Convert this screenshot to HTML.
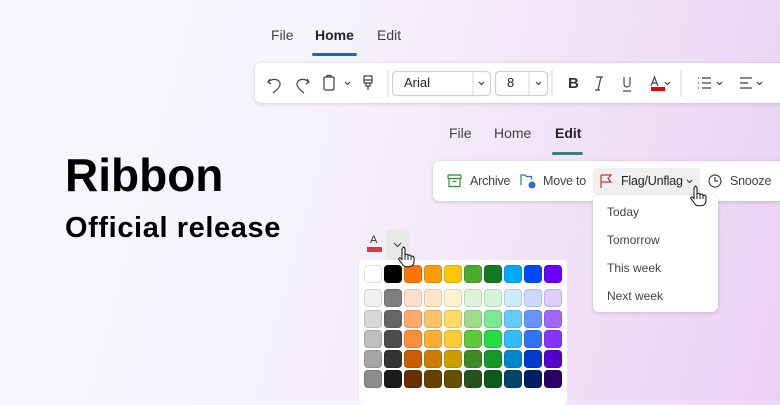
<!DOCTYPE html>
<html><head><meta charset="utf-8"><style>
*{box-sizing:border-box;margin:0;padding:0}
body{width:780px;height:400px;overflow:hidden;position:relative;font-family:"Segoe UI","Liberation Sans",sans-serif;background:linear-gradient(105deg,#f8f8fd 0%,#f6f3fc 40%,#efdcf6 80%,#ebcff3 100%);color:#242424}
.abs{position:absolute}
.t{font-size:14px;color:#424242}
.panel{background:#fff;border-radius:6px;box-shadow:0 1px 4px rgba(0,0,0,.14),0 0 1px rgba(0,0,0,.12)}
svg{position:absolute;overflow:visible}
.sw{position:absolute;width:18px;height:18px;border-radius:4px;border:1px solid rgba(0,0,0,.12)}
</style></head><body>
<div class="abs" style="left:65px;top:147px;font-size:46px;font-weight:bold;color:#000;font-family:'Liberation Sans',sans-serif;line-height:56px">Ribbon</div>
<div class="abs" style="left:65px;top:211px;font-size:29px;font-weight:bold;color:#000;font-family:'Liberation Sans',sans-serif;line-height:34px;letter-spacing:.6px">Official release</div>

<div class="abs t" style="left:271px;top:27px">File</div>
<div class="abs t" style="left:315px;top:27px;font-weight:bold;color:#242424">Home</div>
<div class="abs" style="left:312px;top:53px;width:45px;height:3px;border-radius:2px;background:#0f6cbd"></div>
<div class="abs t" style="left:377px;top:27px">Edit</div>

<div class="abs panel" style="left:255px;top:63px;width:540px;height:40px"></div>
<svg style="left:0;top:0" width="780" height="400" fill="none" stroke="#424242" stroke-width="1.2">
<path d="M270 79 l-2 3 3 2 M268 82 c6-5 13-2 12 3 c-1 4-5 6-7 8"/>
<path d="M307 79 l2 3 -3 2 M309 82 c-6-5 -13-2 -12 3 c1 4 5 6 7 8"/>
<rect x="324" y="77" width="10" height="13" rx="1.5"/><path d="M327 77 v-1.5 h4 v1.5"/>
<path d="M345 82 l2.5 2.5 2.5-2.5"/>
<path d="M364 76 h8 v7 h-8 z M364 80 h8 M366 83 v3 h4 v-3 M368 86 v4"/>
<path d="M388 70 v27" stroke="#ddd"/>
<rect x="392.5" y="71.5" width="98" height="24" rx="4" stroke="#d1d1d1"/>
<path d="M473 72 v23" stroke="#e0e0e0"/><path d="M479 82 l2.5 2.5 2.5-2.5"/>
<rect x="495.5" y="71.5" width="52" height="24" rx="4" stroke="#d1d1d1"/>
<path d="M529 72 v23" stroke="#e0e0e0"/><path d="M536 82 l2.5 2.5 2.5-2.5"/>
<path d="M552 70 v27" stroke="#ddd"/>
<path d="M598 90 l3-13 M596 77 h7 M595 90 h5"/>
<path d="M624 77 v7 a3 3 0 0 0 6 0 v-7 M623 91 h8"/>
<path d="M651 86 l3.5-9 3.5 9 M652.5 83 h5"/>
<path d="M665 82 l2.5 2.5 2.5-2.5"/>
<path d="M681 70 v27" stroke="#ddd"/>
<path d="M698 78 h1 M698 83 h1 M698 88 h1 M702 78 h9 M702 83 h9 M702 88 h9"/>
<path d="M717 82 l2.5 2.5 2.5-2.5"/>
<path d="M740 78 h12 M740 83 h8 M740 88 h12"/>
<path d="M757 82 l2.5 2.5 2.5-2.5"/>
</svg>
<div class="abs" style="left:404px;top:75px;font-size:13px;color:#242424">Arial</div>
<div class="abs" style="left:507px;top:75px;font-size:13px;color:#242424">8</div>
<div class="abs" style="left:568px;top:75px;font-size:15px;font-weight:bold;color:#333;font-family:'Liberation Sans',sans-serif">B</div>
<div class="abs" style="left:651px;top:87px;width:14px;height:4px;background:#e00"></div>

<div class="abs t" style="left:449px;top:125px">File</div>
<div class="abs t" style="left:494px;top:125px">Home</div>
<div class="abs t" style="left:555px;top:125px;font-weight:bold;color:#242424">Edit</div>
<div class="abs" style="left:552px;top:152px;width:31px;height:3px;border-radius:2px;background:#3a7e74"></div>

<div class="abs panel" style="left:433px;top:161px;width:360px;height:40px"></div>
<div class="abs" style="left:593px;top:168px;width:107px;height:27px;background:#f0f0f0;border-radius:4px"></div>
<div class="abs panel" style="left:593px;top:195px;width:125px;height:117px"></div>
<svg style="left:0;top:0" width="780" height="400" fill="none" stroke-width="1.2">
<rect x="448" y="175" width="13" height="3.5" rx="1" stroke="#2e8b3e"/><path d="M449 178.5 v8 h11 v-8 M452.5 181.5 h4" stroke="#2e8b3e"/>
<path d="M521 185 v-10 h4 l1.5 1.5 h5 v3" stroke="#2c72c0"/><circle cx="532" cy="185" r="3.5" fill="#2c72c0" stroke="none"/>
<path d="M601 188 v-13 M601 175 h10 l-3 3.5 3 3.5 h-10" stroke="#c33"/>
<path d="M687 180 l2.5 2.5 2.5-2.5" stroke="#424242"/>
<circle cx="715" cy="181" r="6" stroke="#424242"/><path d="M715 177 v4 h3" stroke="#424242"/>
</svg>
<div class="abs t" style="left:470px;top:174px;font-size:12.5px;letter-spacing:-.2px">Archive</div>
<div class="abs t" style="left:543px;top:174px;font-size:12.5px;letter-spacing:-.2px">Move to</div>
<div class="abs t" style="left:621px;top:174px;font-size:12.5px;letter-spacing:-.2px;color:#242424">Flag/Unflag</div>
<div class="abs t" style="left:730px;top:174px;font-size:12.5px;letter-spacing:-.2px">Snooze</div>
<div class="abs t" style="left:607px;top:205px;font-size:12px">Today</div>
<div class="abs t" style="left:607px;top:233px;font-size:12px">Tomorrow</div>
<div class="abs t" style="left:607px;top:261px;font-size:12px">This week</div>
<div class="abs t" style="left:607px;top:289px;font-size:12px">Next week</div>

<div class="abs" style="left:370px;top:234px;font-size:11px;color:#333">A</div>
<div class="abs" style="left:367px;top:247px;width:15px;height:5px;background:#e33"></div>
<div class="abs" style="left:386px;top:229px;width:23px;height:31px;background:#e8e8e8;border-radius:3px"></div>
<div class="abs" style="left:359px;top:260px;width:208px;height:145px;background:#fff;border-radius:5px"></div>
<div id="pal2"></div>
<svg style="left:0;top:0" width="780" height="400" stroke-width="1">
<defs><g id="hand"><path d="M3 0 c1 0 2 1 2 2 v6 c1-1 3-1 3 0.5 c1-1 3-0.5 3 1 c1-0.8 3-0.3 3 1.2 v4 c0 3-2 5-5 5 h-3 c-2 0-3-1-4-3 l-3-4 c-0.8-1 0.5-2.5 1.5-1.5 l1.5 1.5 v-10.5 c0-1 1-2 2-2z" fill="#fff" stroke="#111"/><path d="M5 8 v5 M8 8.5 v4.5 M11 9.5 v3.5" stroke="#111" fill="none"/></g></defs>
<path d="M394 243 l3.5 3.5 3.5-3.5" stroke="#424242" fill="none"/>
<use href="#hand" x="400" y="247"/>
<use href="#hand" x="692" y="186"/>
</svg>
<script>
var rows=[["#fff","#000","#ff7300","#ff9c00","#ffc600","#4caa2e","#137a24","#00aaff","#0049ff","#6a00ff"],
["#f0f0f0","#7f7f7f","#ffdfcb","#ffe6c8","#fff2cc","#ddf2d6","#d2f5da","#cdebff","#cbd8ff","#ddccff"],
["#d8d8d8","#666","#ffaa6b","#ffc266","#ffd966","#9edc88","#7ce890","#66ccff","#6694ff","#a366ff"],
["#bfbfbf","#4c4c4c","#ff8c3a","#ffad33","#ffcc33","#5cc83a","#22dd44","#33bbff","#3372ff","#8533ff"],
["#a5a5a5","#333","#cc5c00","#cc7d00","#cc9e00","#3c8a24","#16962c","#0088cc","#003acc","#5500cc"],
["#8c8c8c","#1a1a1a","#663000","#664000","#665000","#24531b","#0d5a1a","#004466","#001d66","#2a0066"]];
var ys=[265,289,310,330,350,370],h="";
rows.forEach(function(r,i){r.forEach(function(c,j){h+='<div class="sw" style="left:'+(364+j*20)+'px;top:'+ys[i]+'px;background:'+c+'"></div>'})});
document.getElementById("pal2").innerHTML=h;
</script>
</body></html>
